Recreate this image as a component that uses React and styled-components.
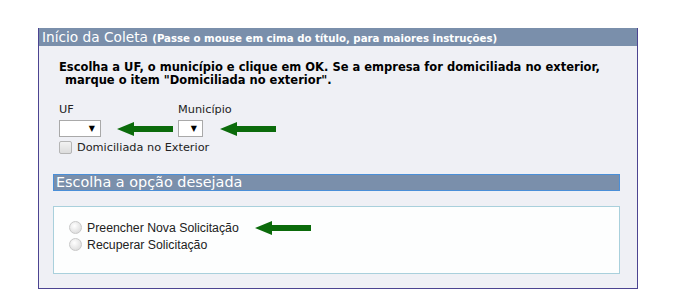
import React from 'react'
import styled, { createGlobalStyle } from 'styled-components'

const GlobalStyle = createGlobalStyle`
    html, body {
        margin: 0;
        background: #ffffff;
    }
`

const Page = styled.div`
    padding: 28px 0 0 38px;
`

const Panel = styled.div`
    width: 598px;
    height: 260px;
    border: 1px solid #4c4491;
    border-top: none;
    background: #eff0f5;
    display: flex;
    flex-direction: column;
`

const PanelTitle = styled.div`
    height: 18px;
    background: #7a8fab;
    color: #ffffff;
    font-family: "DejaVu Sans", Verdana, sans-serif;
    font-size: 13.7px;
    line-height: 19px;
    padding-left: 3px;
    white-space: nowrap;
`

const TitleHint = styled.span`
    font-size: 10.2px;
    font-weight: bold;
`

const Body = styled.div`
    padding: 15px 0 0 20px;
    font-family: "DejaVu Sans", Verdana, sans-serif;
`

const Instructions = styled.div`
    font-size: 11.5px;
    font-weight: bold;
    line-height: 13px;
    color: #000;
`

const Line = styled.div`
    padding-left: ${props => props.indent || 0}px;
`

const FieldsRow = styled.div`
    display: flex;
    margin-top: 17px;
`

const Field = styled.div`
    display: flex;
    flex-direction: column;
    width: ${props => props.width}px;
`

const Label = styled.label`
    font-size: 11.3px;
    color: #222;
    height: 12px;
    line-height: 12px;
`

const SelectRow = styled.div`
    display: flex;
    align-items: center;
    margin-top: 4px;
`

const FakeSelect = styled.div`
    box-sizing: border-box;
    width: ${props => props.width}px;
    height: 17px;
    border: 1px solid #a9a9a9;
    background: #fff;
    display: flex;
    align-items: center;
    justify-content: flex-end;
    padding-right: 5px;
    font-size: 8px;
    color: #000;
`

const Arrow = styled.svg`
    margin-left: ${props => props.offset || 0}px;
    flex: none;
`

const CheckRow = styled.div`
    display: flex;
    align-items: center;
    margin-top: 4px;
    font-size: 11.3px;
    color: #222;
`

const CheckBox = styled.span`
    width: 11px;
    height: 11px;
    border: 1px solid #b5b5b5;
    border-radius: 2px;
    background: linear-gradient(#f2f2f2, #dcdcdc);
    margin-right: 5px;
`

const Section = styled.div`
    margin: 20px 0 0 14px;
    width: 567px;
`

const SectionTitle = styled.div`
    box-sizing: border-box;
    height: 17px;
    background: #7a8fab;
    border: 1px solid #4a8fd8;
    color: #fff;
    font-family: "DejaVu Sans", Verdana, sans-serif;
    font-size: 14.4px;
    line-height: 15px;
    padding-left: 2px;
    white-space: nowrap;
`

const OptionsBox = styled.div`
    box-sizing: border-box;
    margin-top: 15px;
    height: 68px;
    background: #fdfefe;
    border: 1px solid #a9d0dc;
    padding: 12px 0 0 15px;
    font-family: "Liberation Sans", Arial, sans-serif;
    font-size: 12.3px;
    color: #222;
`

const Option = styled.div`
    display: flex;
    align-items: center;
    height: 17px;
`

const Radio = styled.span`
    width: 11px;
    height: 11px;
    border-radius: 50%;
    border: 1px solid #c8c8c8;
    background: radial-gradient(circle at 40% 35%, #ffffff, #d4d4d4);
    margin-right: 5px;
`

const GreenArrow = ({ offset }) => (
    <Arrow offset={offset} width="56" height="14" viewBox="0 0 56 14">
        <polygon points="0,7 17,0 17,4 56,4 56,10 17,10 17,14" fill="#0b6b0b" />
    </Arrow>
)

export default function App() {
    return (
        <Page>
            <GlobalStyle />
            <Panel>
                <PanelTitle>
                    Início da Coleta <TitleHint>(Passe o mouse em cima do título, para maiores instruções)</TitleHint>
                </PanelTitle>
                <Body>
                    <Instructions>
                        <Line>Escolha a UF, o município e clique em OK. Se a empresa for domiciliada no exterior,</Line>
                        <Line indent={6}>marque o item "Domiciliada no exterior".</Line>
                    </Instructions>
                    <FieldsRow>
                        <Field width={119}>
                            <Label>UF</Label>
                            <SelectRow>
                                <FakeSelect width={42}>▼</FakeSelect>
                                <GreenArrow offset={16} />
                            </SelectRow>
                        </Field>
                        <Field width={200}>
                            <Label>Município</Label>
                            <SelectRow>
                                <FakeSelect width={25}>▼</FakeSelect>
                                <GreenArrow offset={17} />
                            </SelectRow>
                        </Field>
                    </FieldsRow>
                    <CheckRow>
                        <CheckBox />
                        Domiciliada no Exterior
                    </CheckRow>
                </Body>
                <Section>
                    <SectionTitle>Escolha a opção desejada</SectionTitle>
                    <OptionsBox>
                        <Option>
                            <Radio />
                            Preencher Nova Solicitação
                            <GreenArrow offset={16} />
                        </Option>
                        <Option>
                            <Radio />
                            Recuperar Solicitação
                        </Option>
                    </OptionsBox>
                </Section>
            </Panel>
        </Page>
    )
}
